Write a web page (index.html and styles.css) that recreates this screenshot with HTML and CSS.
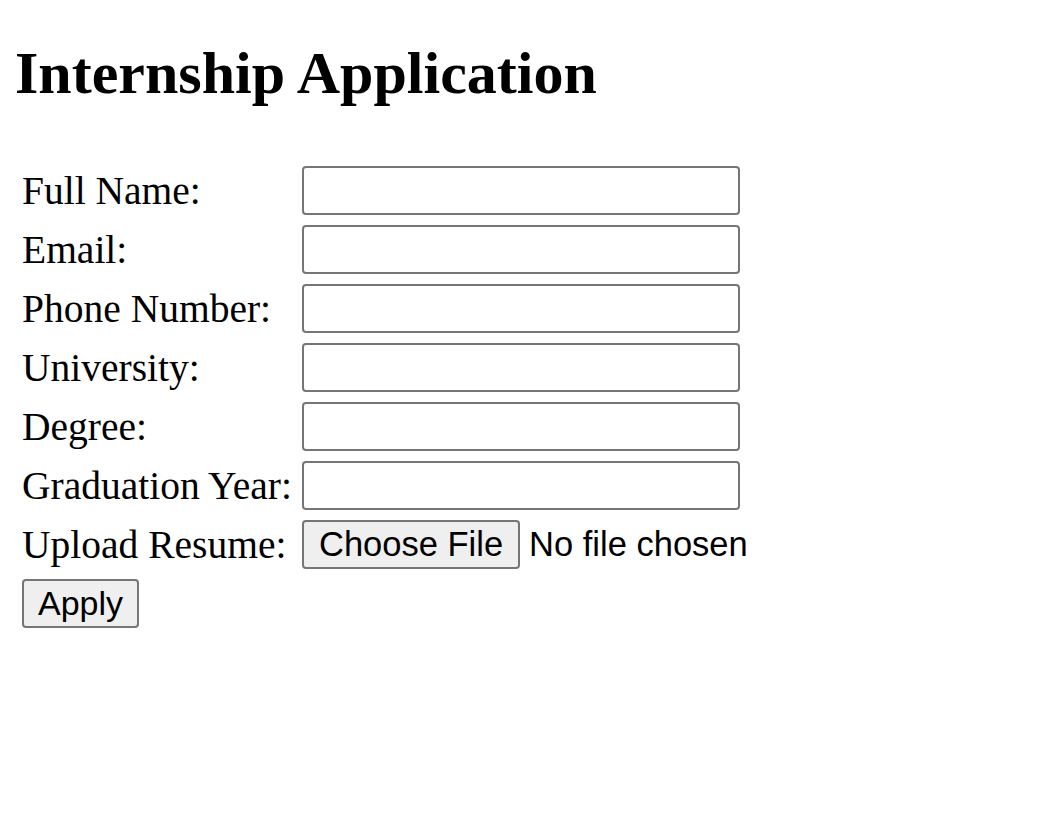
FILE: index.html
```html
<!DOCTYPE html>
<html lang="en">
<head>
<meta charset="utf-8">
<title>Internship Application</title>
<link rel="stylesheet" href="styles.css">
</head>
<body>
<h1 class="title">Internship Application</h1>
<form class="form">
  <label class="label" for="name">Full Name:</label>
  <input class="field" id="name" type="text">
  <label class="label" for="email">Email:</label>
  <input class="field" id="email" type="email">
  <label class="label" for="phone">Phone Number:</label>
  <input class="field" id="phone" type="tel">
  <label class="label" for="uni">University:</label>
  <input class="field" id="uni" type="text">
  <label class="label" for="degree">Degree:</label>
  <input class="field" id="degree" type="text">
  <label class="label" for="year">Graduation Year:</label>
  <input class="field" id="year" type="text">
  <label class="label" for="resume">Upload Resume:</label>
  <input class="file" id="resume" type="file">
  <button class="apply" type="submit">Apply</button>
</form>
</body>
</html>
```
FILE: styles.css
```css
html, body {
  background: #ffffff;
}
body {
  margin: 0;
  padding: 0 15px;
  color: #000000;
  font-family: "Liberation Serif", "Times New Roman", serif;
}
.title {
  margin: 40px 0 0;
  font-size: 60px;
  font-weight: bold;
  line-height: 66px;
}
.form {
  display: grid;
  grid-template-columns: 280px auto;
  grid-auto-rows: 49px;
  row-gap: 10px;
  align-items: center;
  justify-content: start;
  padding: 60px 7px 0;
}
.label {
  font-size: 39.5px;
  line-height: normal;
}
.field {
  box-sizing: border-box;
  width: 438px;
  height: 49px;
  margin: 0;
  border: 2px solid #767676;
  border-radius: 4px;
  background: #ffffff;
  font: 34px "Liberation Sans", Arial, sans-serif;
  padding: 0 4px;
}
.file {
  height: 49px;
  margin: 0;
  padding: 0;
  font: 34.5px "Liberation Sans", Arial, sans-serif;
  color: #000000;
}
.file::file-selector-button {
  box-sizing: border-box;
  height: 49px;
  margin: 0 9px 0 0;
  padding: 0 15px;
  border: 2px solid #767676;
  border-radius: 4px;
  background: #efefef;
  color: #000000;
  font: 34.5px "Liberation Sans", Arial, sans-serif;
}
.apply {
  grid-column: 1 / -1;
  justify-self: start;
  box-sizing: border-box;
  height: 49px;
  margin: 0;
  padding: 0 14px;
  border: 2px solid #767676;
  border-radius: 4px;
  background: #efefef;
  color: #000000;
  font: 34px "Liberation Sans", Arial, sans-serif;
}
```
